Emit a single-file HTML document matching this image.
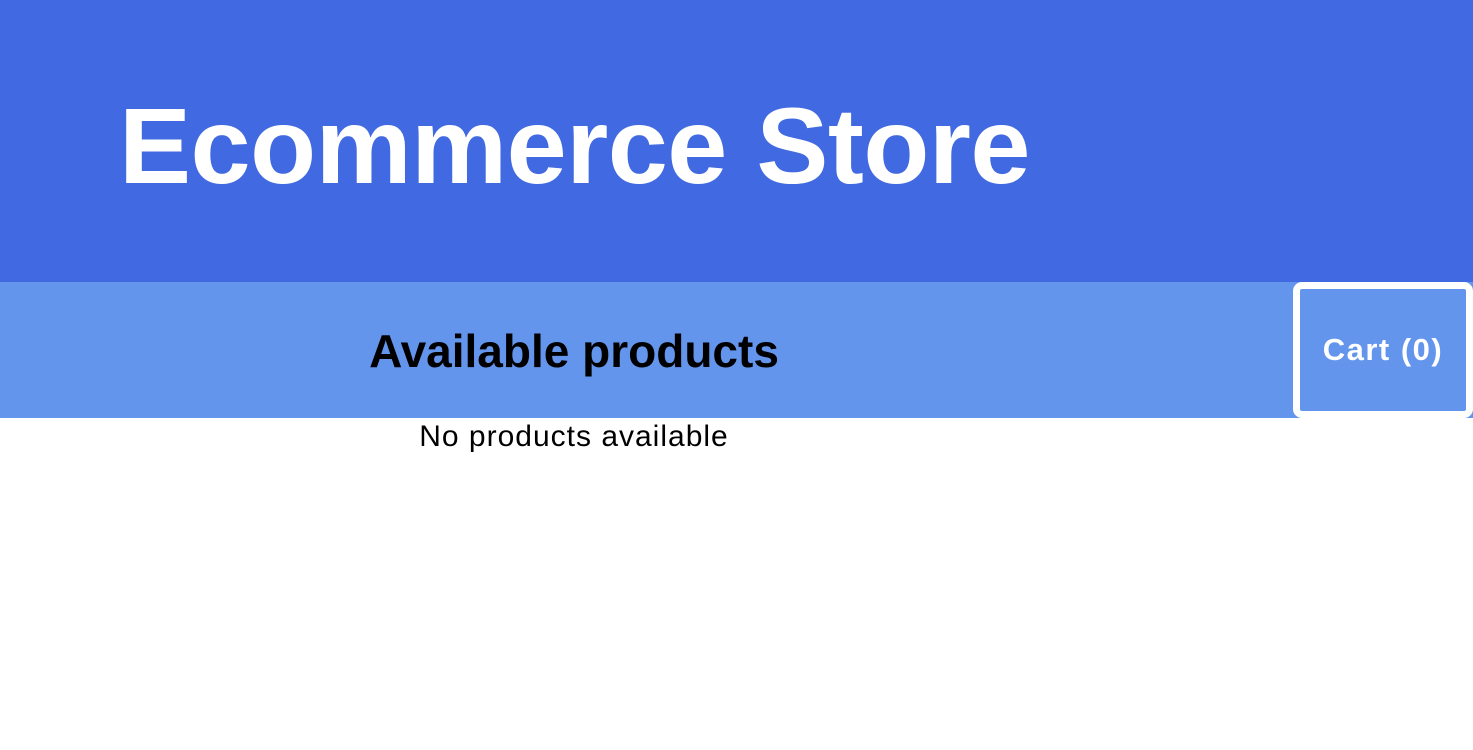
<!DOCTYPE html>
<html><head><meta charset="utf-8"><style>
html,body{margin:0;padding:0;width:1473px;height:750px;overflow:hidden;background:#fff;font-family:"Liberation Sans",Arial,sans-serif;}
.h{position:absolute;left:0;top:0;width:1473px;height:282px;background:#4169E1;}
.h h1{position:absolute;left:119px;top:86px;margin:0;color:#fff;font-size:108px;font-weight:bold;line-height:120px;letter-spacing:-0.5px;white-space:nowrap;}
.b{position:absolute;left:0;top:282px;width:1473px;height:136px;background:#6495ED;}
.b h2{position:absolute;left:0;width:1148px;text-align:center;top:45px;margin:0;font-size:46px;line-height:48px;font-weight:bold;color:#000;}
.cart{position:absolute;left:1293px;top:282px;width:166px;height:122px;border:7px solid #fff;border-radius:9px;background:#6495ED;color:#fff;font-weight:bold;font-size:31px;letter-spacing:1.5px;display:flex;align-items:center;justify-content:center;}
.np{position:absolute;left:0;width:1148px;text-align:center;top:420px;font-size:30px;letter-spacing:1px;line-height:34px;color:#000;}
</style></head><body>
<div class="h"><h1>Ecommerce Store</h1></div>
<div class="b"><h2>Available products</h2></div>
<div class="cart">Cart (0)</div>
<div class="np">No products available</div>
</body></html>
